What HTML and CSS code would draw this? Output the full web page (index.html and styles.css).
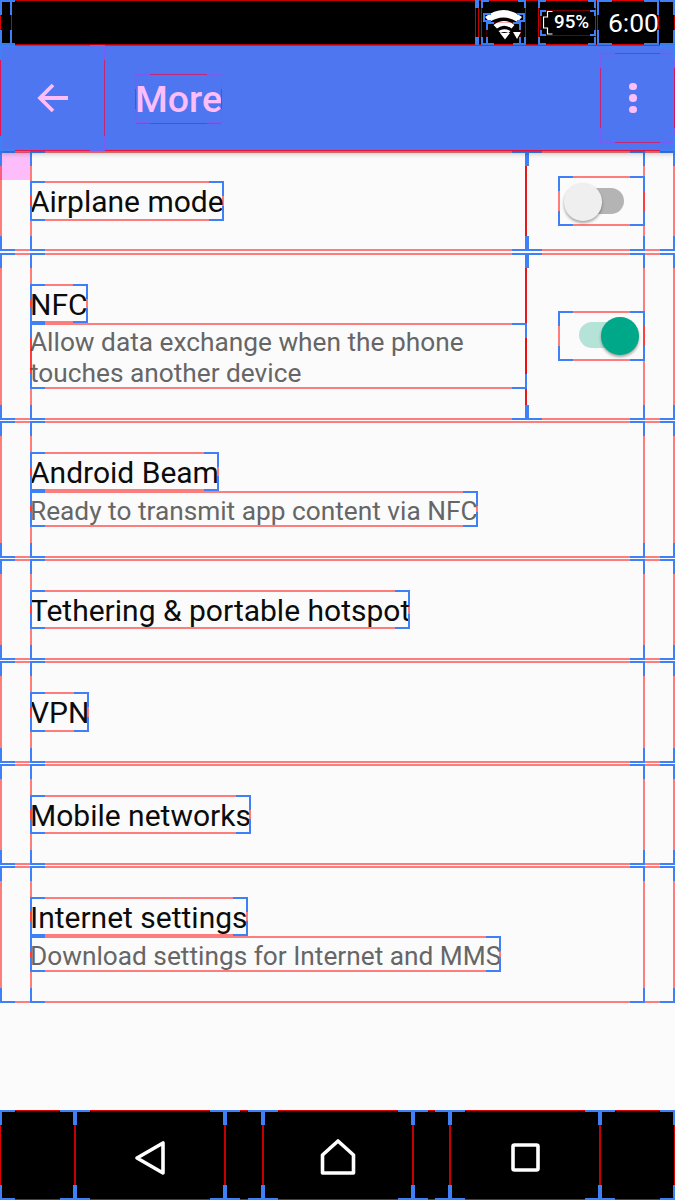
FILE: index.html
```html
<!DOCTYPE html>
<html lang="en">
<head>
<meta charset="utf-8">
<title>More</title>
<link rel="stylesheet" href="styles.css">
</head>
<body>
<div class="screen">
  <header class="status bd">
    <div class="st-left bd"></div>
    <div class="st-spacer"></div>
    <div class="st-gap bd"></div>
    <div class="st-wifi bd">
      <svg class="wifi-icon" viewBox="0 0 40 32" aria-hidden="true">
        <path class="wifi-band" d="M1 9 Q19.500 -5 38 9 L33.500 14 Q19.500 5 5.500 14Z"/>
        <path class="wifi-band" d="M9.500 17 Q20 9 30.500 17 L27.500 20.500 Q20 15 13 20.500Z"/>
        <path class="wifi-band" d="M14.500 23 Q20 19.500 26.500 23 L24.500 25 Q20 23 16.500 25Z"/>
        <path class="wifi-band" d="M16 25 H26 L21 31.500Z"/>
        <path class="wifi-band" d="M29 24 H37 L33 31Z"/>
      </svg>
      <div class="st-wifi-inner bd"></div>
      <div class="st-wifi-low bd"></div>
    </div>
    <div class="st-battery bd">
      <div class="battery-box bd">
        <svg class="battery-icon" viewBox="0 0 10 24" aria-hidden="true">
          <path class="battery-line" d="M9.500 .5 H4.500 V6 H.5 V17 H4.500 V23 H9.500"/>
        </svg>
        <span class="battery-text">95%</span>
      </div>
    </div>
    <div class="st-time bd"><span>6:00</span></div>
  </header>

  <nav class="toolbar bd">
    <div class="tb-back bd tb">
      <svg class="tb-arrow" viewBox="0 0 32 32" aria-hidden="true">
        <path class="tb-stroke" d="M31 16 H3 M16 3 L3 16 L16 29"/>
      </svg>
    </div>
    <div class="tb-title bd tb">More</div>
    <div class="tb-more bd tb">
      <span class="dot"></span><span class="dot"></span><span class="dot"></span>
    </div>
  </nav>

  <main class="list">
    <div class="pink-mark"></div>
    <section class="row row-first bd">
      <div class="row-in bd">
        <div class="col-text bd"><div class="title bd">Airplane mode</div></div>
        <div class="col-switch bd">
          <div class="switch bd">
            <span class="track"></span><span class="thumb"></span>
          </div>
        </div>
      </div>
    </section>
    <section class="row row-2 bd">
      <div class="row-in bd">
        <div class="col-text bd">
          <div class="title bd">NFC</div>
          <div class="summary summary-block bd">Allow data exchange when the phone touches another device</div>
        </div>
        <div class="col-switch bd">
          <div class="switch on bd">
            <span class="track"></span><span class="thumb"></span>
          </div>
        </div>
      </div>
    </section>
    <section class="row row-3 bd">
      <div class="row-in stack bd">
        <div class="title bd">Android Beam</div>
        <div class="summary bd">Ready to transmit app content via NFC</div>
      </div>
    </section>
    <section class="row row-1 bd">
      <div class="row-in stack bd"><div class="title bd">Tethering &amp; portable hotspot</div></div>
    </section>
    <section class="row row-1 bd">
      <div class="row-in stack bd"><div class="title bd">VPN</div></div>
    </section>
    <section class="row row-1 bd">
      <div class="row-in stack bd"><div class="title bd">Mobile networks</div></div>
    </section>
    <section class="row row-3 bd">
      <div class="row-in stack bd">
        <div class="title bd">Internet settings</div>
        <div class="summary bd">Download settings for Internet and MMS</div>
      </div>
    </section>
  </main>

  <footer class="navbar bd">
    <div class="nv-side bd"></div>
    <div class="nv-btn bd">
      <svg class="nv-icon" viewBox="0 0 40 40" aria-hidden="true"><path class="nv-stroke" d="M33 5 V35 L7 20Z"/></svg>
    </div>
    <div class="nv-gap bd"></div>
    <div class="nv-btn bd">
      <svg class="nv-icon" viewBox="0 0 40 40" aria-hidden="true"><path class="nv-stroke" d="M20 3 L35.500 17 V35 H4.500 V17Z"/></svg>
    </div>
    <div class="nv-gap bd"></div>
    <div class="nv-btn bd">
      <svg class="nv-icon" viewBox="0 0 40 40" aria-hidden="true"><rect class="nv-stroke" x="8" y="7" width="25" height="25" rx="1.500"/></svg>
    </div>
    <div class="nv-side bd"></div>
  </footer>
</div>
</body>
</html>
```

FILE: styles.css
```css
* { box-sizing: border-box; }

html, body { margin: 0; padding: 0; background: #fafafa; }

.screen {
  width: 675px;
  height: 1200px;
  display: flex;
  flex-direction: column;
  overflow: hidden;
  font-family: Roboto, "Noto Sans", sans-serif;
  background: #fbfbfb;
}

/* Debug "layout bounds" overlay: red box + blue corner marks */
.bd { position: relative; --line: rgba(255, 0, 0, .5); --mark: #3f80f6; --w: 15px; --t: 2px; --lw: 2px; }
.bd::before {
  content: "";
  position: absolute;
  inset: 0;
  border: var(--lw) solid var(--line);
  pointer-events: none;
  z-index: 2;
}
.bd::after {
  content: "";
  position: absolute;
  inset: 0;
  pointer-events: none;
  z-index: 3;
  background-image:
    linear-gradient(var(--mark), var(--mark)), linear-gradient(var(--mark), var(--mark)),
    linear-gradient(var(--mark), var(--mark)), linear-gradient(var(--mark), var(--mark)),
    linear-gradient(var(--mark), var(--mark)), linear-gradient(var(--mark), var(--mark)),
    linear-gradient(var(--mark), var(--mark)), linear-gradient(var(--mark), var(--mark));
  background-repeat: no-repeat;
  background-size:
    var(--w) var(--t), var(--t) var(--w),
    var(--w) var(--t), var(--t) var(--w),
    var(--w) var(--t), var(--t) var(--w),
    var(--w) var(--t), var(--t) var(--w);
  background-position:
    left top, left top,
    right top, right top,
    left bottom, left bottom,
    right bottom, right bottom;
}
.bd.tb { --mark: #7a5cf5; --line: rgba(225, 20, 90, .8); --t: 1.500px; --lw: 1.500px; }
.status .bd, .status.bd, .navbar .bd, .navbar.bd { --line: rgba(230, 0, 0, .85); --lw: 1.500px; }
.toolbar.bd { --line: rgba(240, 10, 40, .9); --lw: 1.500px; }

/* Nested boxes that share an edge with their parent draw it only once */
.row-in::before { border-block-width: 0; }
.col-text::before { border-width: 0 2px 0 0; border-color: rgba(225, 0, 0, .9); }
.col-switch::before { border-width: 0; }

/* Status bar */
.status { height: 45px; flex: none; background: #000; display: flex; }
.st-left { width: 12px; }
.st-spacer { flex: 1; }
.st-gap { width: 4px; margin-right: 2px; --w: 8px; --line: rgba(120, 30, 120, .9); }
.st-wifi {
  width: 45px;
  margin-right: 12px;
  flex: none;
  --w: 8px;
}
.wifi-icon { display: block; width: 40px; height: 32px; margin: 8px 0 0 3px; }
.wifi-band { fill: #fff; }
.st-wifi-inner {
  position: absolute;
  left: 2px;
  right: 1px;
  top: 13px;
  height: 9px;
  --w: 8px;
  --line: transparent;
}
.status .st-wifi-inner.bd { --line: transparent; }
.st-wifi-low {
  position: absolute;
  left: 5px;
  right: 5px;
  top: 22px;
  bottom: 0;
  --w: 8px;
}
.status .st-wifi-low.bd { --line: rgba(230, 0, 0, .3); }
.st-battery {
  width: 58px;
  margin-right: 1px;
  display: flex;
  align-items: center;
  justify-content: flex-end;
  --w: 8px;
}
.battery-box {
  display: flex;
  align-items: center;
  height: 26px;
  width: 56px;
  padding-left: 3px;
  gap: 1px;
  --w: 6px;
}
.status .battery-box.bd { --line: rgba(230, 0, 0, .5); }
.battery-icon { width: 10px; height: 24px; display: block; flex: none; }
.battery-line { fill: none; stroke: #fff; stroke-width: 1.200; }
.battery-text { color: #fff; font-size: 18.750px; font-weight: 500; line-height: 1; }
.st-time {
  width: 62px;
  margin-right: 16px;
  display: flex;
  align-items: center;
  justify-content: flex-end;
  color: #fff;
  font-size: 26.500px;
  font-weight: 400;
}

/* Toolbar */
.toolbar {
  height: 106px;
  flex: none;
  display: flex;
  align-items: center;
  background: #4d76f0;
  box-shadow: 0 2px 6px rgba(0, 0, 0, .28);
  z-index: 5;
}
.tb-back {
  width: 105px;
  height: 106px;
  display: flex;
  align-items: center;
  justify-content: center;
}
.tb-arrow { width: 32px; height: 32px; display: block; }
.tb-stroke { fill: none; stroke: #fdbdfb; stroke-width: 3.800; stroke-linecap: butt; }
.tb-title {
  margin-left: 30px;
  height: 50px;
  width: 87px;
  margin-top: 1px;
  color: #fdbdfb;
  font-size: 37.500px;
  font-weight: 500;
  line-height: 50px;
  white-space: nowrap;
}
.tb-more {
  width: 75px;
  height: 90px;
  margin-left: auto;
  padding-right: 9px;
  display: flex;
  flex-direction: column;
  align-items: center;
  justify-content: center;
  gap: 4px;
}
.dot { width: 7.500px; height: 7.500px; border-radius: 50%; background: #fdbdfb; }

/* List */
.list { flex: 1; display: flex; flex-direction: column; gap: 1.250px; position: relative; min-height: 0; }
.pink-mark { position: absolute; left: 0; top: 1px; width: 30px; height: 28px; background: #fdbdfb; }
.row { padding: 0 30px; flex: none; display: flex; }
.row-first { height: 100.250px; }
.row-1 { height: 101.250px; }
.row-2 { height: 167.500px; }
.row-3 { height: 136.250px; }
.row-in { flex: 1; display: flex; min-width: 0; }
.stack { flex-direction: column; justify-content: center; align-items: flex-start; }
.col-text {
  width: 497px;
  display: flex;
  flex-direction: column;
  justify-content: center;
  align-items: flex-start;
}
.col-switch {
  flex: 1;
  display: flex;
  align-items: center;
  justify-content: flex-end;
}
.title {
  height: 39.400px;
  color: #0c0c0c;
  font-size: 30px;
  line-height: 41px;
  white-space: nowrap;
}
.summary {
  height: 36px;
  color: #666;
  font-size: 26.250px;
  line-height: 40px;
  white-space: nowrap;
}
.summary-block { width: 497px; height: 66px; line-height: 31px; white-space: normal; padding-top: 4px; }

/* Switch */
.switch { width: 87px; height: 50px; flex: none; }
.track {
  position: absolute;
  left: 21px;
  top: 12px;
  width: 45px;
  height: 26px;
  border-radius: 13px;
  background: #b4b4b4;
}
.thumb {
  position: absolute;
  left: 6px;
  top: 7px;
  width: 37.500px;
  height: 37.500px;
  border-radius: 50%;
  background: #efefef;
  box-shadow: 0 2px 3px rgba(0, 0, 0, .35);
}
.on .track { background: #b5e3d8; top: 11px; }
.on .thumb { background: #00a88a; left: 43px; top: 6px; }

/* Navigation bar */
.navbar { height: 90px; flex: none; background: #000; display: flex; }
.nv-side { width: 75px; }
.nv-gap { width: 37.500px; }
.nv-btn {
  width: 150px;
  padding-top: 6px;
  display: flex;
  align-items: center;
  justify-content: center;
}
.nv-icon { width: 40px; height: 40px; display: block; }
.nv-stroke { fill: none; stroke: #fff; stroke-width: 3.600; stroke-linejoin: round; }
```
